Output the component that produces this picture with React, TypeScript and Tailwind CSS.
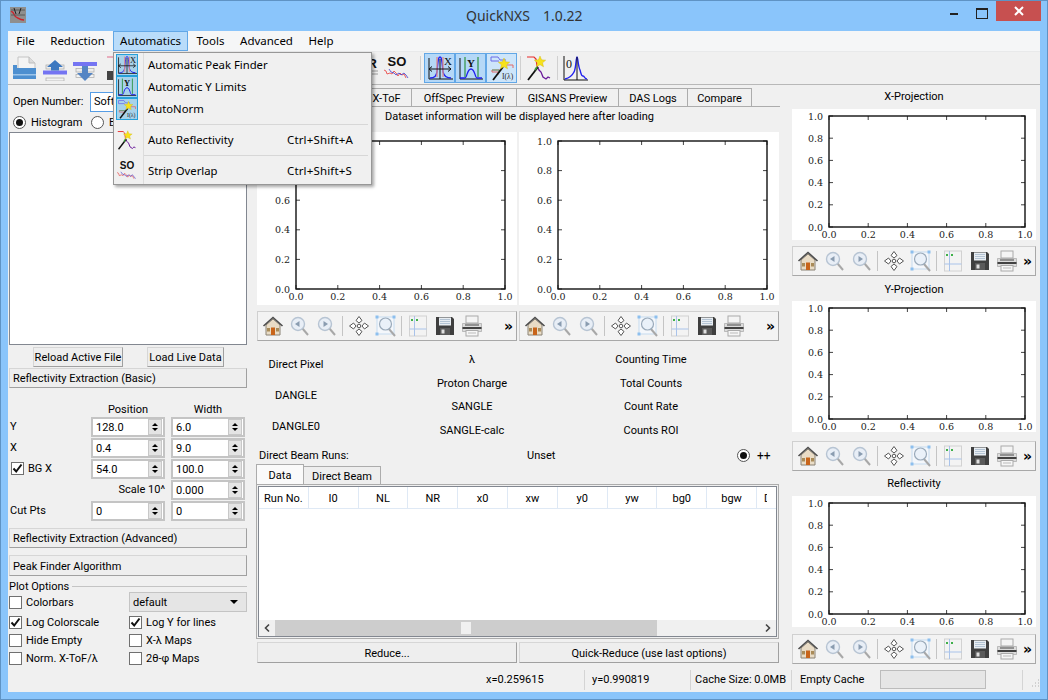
import type { ReactNode } from 'react';

const TICKS = ['0.0', '0.2', '0.4', '0.6', '0.8', '1.0'];

function Plot({ w, h, left, top, right, bottom }: { w: number; h: number; left: number; top: number; right: number; bottom: number }) {
  const ax = w - left - right;
  const ay = h - top - bottom;
  return (
    <svg width={w} height={h} className="block bg-white shrink-0">
      <rect x={left} y={top} width={ax} height={ay} fill="white" stroke="#111" strokeWidth="1.4" />
      {TICKS.map((t, i) => {
        const x = left + (ax * i) / 5;
        const y = top + ay - (ay * i) / 5;
        return (
          <g key={t}>
            <path d={`M${x} ${top}v4M${x} ${top + ay}v-4M${left} ${y}h4M${left + ax} ${y}h-4`} stroke="#111" strokeWidth="0.8" fill="none" />
            <text x={x} y={top + ay + 11} textAnchor="middle" fontSize="9.5" fill="#222" fontFamily="'DejaVu Serif', serif">{t}</text>
            <text x={left - 6} y={y + 3.5} textAnchor="end" fontSize="9.5" fill="#222" fontFamily="'DejaVu Serif', serif">{t}</text>
          </g>
        );
      })}
    </svg>
  );
}

function HomeIcon() {
  return (
    <svg width="22" height="22" viewBox="0 0 22 22">
      <path d="M4 10v10h14V10L11 4z" fill="#e9dcc6" stroke="#8a8274" />
      <path d="M1.500 11 11 2.500 20.500 11" fill="none" stroke="#4d4d4d" strokeWidth="1.6" />
      <rect x="9" y="12.500" width="4" height="7.500" fill="#c8641a" />
      <rect x="5" y="13" width="3" height="3.500" fill="#a98b58" />
      <rect x="14" y="13" width="3" height="3.500" fill="#a98b58" />
    </svg>
  );
}

function ZoomDir({ next }: { next?: boolean }) {
  return (
    <svg width="22" height="22" viewBox="0 0 22 22">
      <path d="M13.500 13.500 19 20" stroke="#a8a8a8" strokeWidth="2" />
      <circle cx="9" cy="9" r="6.500" fill="#e8eef6" stroke="#b7c4d3" strokeWidth="1.4" />
      <path d={next ? 'M7.500 6v6l4.500-3z' : 'M10.500 6v6L6 9z'} fill="#8a9cb0" />
    </svg>
  );
}

function MoveIcon() {
  return (
    <svg width="22" height="22" viewBox="0 0 22 22" fill="#fff" stroke="#555" strokeWidth="1">
      <path d="M11 1.500 14 5.500 11 8 8 5.500z" />
      <path d="M11 20.500 14 16.500 11 14 8 16.500z" />
      <path d="M1.500 11 5.500 8 8 11 5.500 14z" />
      <path d="M20.500 11 16.500 8 14 11 16.500 14z" />
      <circle cx="11" cy="11" r="1.800" />
    </svg>
  );
}

function ZoomRectIcon() {
  return (
    <svg width="24" height="24" viewBox="0 0 24 24">
      <rect x="3" y="3" width="17" height="17" fill="#f4f7fb" stroke="#c6dbef" />
      <path d="M15 15 21 22" stroke="#a8a8a8" strokeWidth="2" />
      <circle cx="11.500" cy="10" r="6" fill="#eaf1f9" stroke="#9aaaba" strokeWidth="1.2" />
      <g fill="#8dbfee">
        <rect x="1.500" y="1.500" width="3" height="3" />
        <rect x="18.500" y="1.500" width="3" height="3" />
        <rect x="1.500" y="18.500" width="3" height="3" />
      </g>
    </svg>
  );
}

function SubplotIcon() {
  return (
    <svg width="20" height="22" viewBox="0 0 20 22">
      <rect x="1.500" y="1" width="17" height="20" fill="#f3f3f3" stroke="#d2d2d2" />
      <path d="M6.500 1v20M1.500 14h17" stroke="#a9c3ea" />
      <path d="M3 5h2M8 5h2" stroke="#3fb04a" strokeWidth="2" />
    </svg>
  );
}

function SaveIcon() {
  return (
    <svg width="20" height="20" viewBox="0 0 20 20">
      <path d="M1 1h16l2 2v16H1z" fill="#3f3f3f" />
      <rect x="4" y="1.500" width="12" height="8" fill="#e8edf2" />
      <path d="M5 3.500h10M5 5.500h10M5 7.500h10" stroke="#b4c4d4" />
      <rect x="5" y="12" width="10" height="7" fill="#5a5a5a" />
      <rect x="6.500" y="13.500" width="3" height="4" fill="#e0e0e0" />
    </svg>
  );
}

function PrintIcon() {
  return (
    <svg width="22" height="22" viewBox="0 0 22 22">
      <rect x="5" y="1" width="12" height="7" fill="#f4f4f4" stroke="#aaa" />
      <path d="M1.500 8.500h19v8h-19z" fill="#dcdcdc" stroke="#9a9a9a" strokeWidth="0.6" />
      <path d="M4 10h14" stroke="#444" strokeWidth="1" />
      <path d="M1.500 13h19" stroke="#1c1c1c" strokeWidth="1.6" />
      <rect x="5" y="15.500" width="12" height="5.500" fill="#f6f6f6" stroke="#aaa" />
      <path d="M7 18h8" stroke="#bbb" />
    </svg>
  );
}

function NavBar({ className }: { className: string }) {
  const sep = <div className="w-px h-[20px] bg-[#c4c4c4] mx-[2px]" />;
  const btn = 'w-[27px] flex items-center justify-center shrink-0';
  return (
    <div className={`${className} h-[30px] flex items-center pl-[1px] bg-[#f3f3f3] border border-[#d0d0d0] border-r-[#a8a8a8] border-b-[#a8a8a8] shrink-0`}>
      <div className={btn}><HomeIcon /></div>
      <div className={btn}><ZoomDir /></div>
      <div className={btn}><ZoomDir next /></div>
      {sep}
      <div className={btn}><MoveIcon /></div>
      <div className={btn}><ZoomRectIcon /></div>
      {sep}
      <div className={btn}><SubplotIcon /></div>
      <div className={btn}><SaveIcon /></div>
      <div className={btn}><PrintIcon /></div>
      <span className="ml-auto mr-[3px] font-bold text-[14px] leading-none font-['DejaVu_Sans',sans-serif]">»</span>
    </div>
  );
}

function IconOpen() {
  return (
    <svg width="26" height="26" viewBox="0 0 26 26">
      <path d="M6 2h11l6 6v8H6z" fill="#f4f4f4" stroke="#c4c4c4" />
      <path d="M17 2v6h6" fill="#dcdcdc" stroke="#bdbdbd" />
      <path d="M1 10h4v3h19v11H1z" fill="#4d8fd0" />
      <path d="M1 19h23v1.500H1z" fill="#9cc4ea" />
    </svg>
  );
}

function IconUp() {
  return (
    <svg width="26" height="26" viewBox="0 0 26 26">
      <rect x="4" y="10" width="18" height="4" fill="#ececec" stroke="#a8a8a8" strokeWidth="0.7" />
      <rect x="1" y="15.500" width="24" height="4" fill="#7474f2" />
      <rect x="4" y="23" width="18" height="3" fill="#f2f2f2" stroke="#a8a8a8" strokeWidth="0.7" />
      <path d="M13 5l8 7h-4v3.500H9V12H5z" fill="#3c78c0" />
    </svg>
  );
}

function IconDown() {
  return (
    <svg width="26" height="26" viewBox="0 0 26 26">
      <rect x="1" y="7" width="24" height="4" fill="#7474f2" />
      <rect x="4" y="13.500" width="18" height="3.500" fill="#ececec" stroke="#a8a8a8" strokeWidth="0.7" />
      <rect x="4" y="19.500" width="18" height="3" fill="#f2f2f2" stroke="#a8a8a8" strokeWidth="0.7" />
      <path d="M10 11h6v7h5l-8 8-8-8h5z" fill="#5585c4" />
    </svg>
  );
}

function IconSave() {
  return (
    <svg width="26" height="26" viewBox="0 0 26 26">
      <path d="M1 2h8l2 6" fill="none" stroke="#e06a8a" />
      <rect x="1" y="16" width="10" height="9" fill="#444" />
    </svg>
  );
}

function IconX() {
  return (
    <svg width="26" height="26" viewBox="0 0 26 26">
      <path d="M2 3v21h24" fill="none" stroke="#111" />
      <path d="M3 23c5 0 6-2 7-6 1-10 1-15 3-15s2 5 3 15c1 4 3 6 8 6" fill="none" stroke="#2222ee" strokeWidth="1.3" />
      <path d="M10 2v20M16 2v20" stroke="#e08a8a" strokeWidth="1.3" />
      <path d="M2 14h22M2 14l3-2.500M2 14l3 2.500M24 14l-3-2.500M24 14l-3 2.500M13 4v20" fill="none" stroke="#111" />
      <text x="17" y="10" fontSize="11" fontFamily="'Liberation Serif', serif" fill="#111">X</text>
    </svg>
  );
}

function IconY() {
  return (
    <svg width="26" height="26" viewBox="0 0 26 26">
      <path d="M2 3v21h23" fill="none" stroke="#111" />
      <path d="M2 23h5c2 0 2-9 6-9s4 9 6 9h5" fill="none" stroke="#2222ee" strokeWidth="1.3" />
      <path d="M7 2v20M20 2v20" stroke="#3a9a52" strokeWidth="1.3" />
      <text x="9" y="12" fontSize="11" fontWeight="bold" fontFamily="'Liberation Serif', serif" fill="#111">Y</text>
    </svg>
  );
}

function Star({ x, y, r }: { x: number; y: number; r: number }) {
  const pts = Array.from({ length: 10 }, (_, i) => {
    const a = (Math.PI / 5) * i - Math.PI / 2;
    const q = i % 2 ? r * 0.45 : r;
    return `${x + q * Math.cos(a)},${y + q * Math.sin(a)}`;
  }).join(' ');
  return <polygon points={pts} fill="#f7e21a" stroke="#c9b010" strokeWidth="0.4" />;
}

function IconNorm() {
  return (
    <svg width="26" height="26" viewBox="0 0 26 26">
      <path d="M2 2h7l2 3h6M2 2v4h8" fill="none" stroke="#6a6ae8" />
      <path d="M18 10h6v3M3 17h6v3M3 17v-2h8" fill="none" stroke="#e06a6a" />
      <path d="M3 15h7v3" fill="none" stroke="#58a878" />
      <path d="M4 25 14 12" stroke="#111" strokeWidth="1.8" />
      <Star x={15} y={9} r={6} />
      <text x="13" y="24" fontSize="7.500" fontFamily="'Liberation Serif', serif" fill="#222">I(λ)</text>
    </svg>
  );
}

function IconRefl({ size = 26 }: { size?: number }) {
  return (
    <svg width={size} height={size} viewBox="0 0 26 26">
      <path d="M1 2h7l2 2 1 7" fill="none" stroke="#e82a2a" strokeWidth="1.200" />
      <path d="M11 11l2 4 2 2 2 5 3 2 2-2 2 1" fill="none" stroke="#6a1a9a" strokeWidth="1.300" />
      <path d="M2 25 12 12" stroke="#111" strokeWidth="1.800" />
      <path d="M9 15l2-3" stroke="#3a9a3a" strokeWidth="1.800" />
      <Star x={14} y={7} r={6} />
    </svg>
  );
}

function IconZero() {
  return (
    <svg width="26" height="26" viewBox="0 0 26 26">
      <path d="M1 1v24h24" fill="none" stroke="#111" />
      <path d="M2 24c4-1 7-3 9-7 2-3 2-15 3-15s1 9 3 13c1 3 1 6 3 6s1 3 4 3" fill="none" stroke="#2222ee" strokeWidth="1.400" />
      <path d="M14 2v23" stroke="#111" />
      <text x="3" y="13" fontSize="12" fontFamily="'Liberation Serif', serif" fill="#111">0</text>
    </svg>
  );
}

function IconSO({ size = 26 }: { size?: number }) {
  return (
    <svg width={size} height={size} viewBox="0 0 26 26">
      <text x="13" y="11" textAnchor="middle" fontSize="13" fontWeight="bold" fontFamily="'Liberation Sans', sans-serif" fill="#111">SO</text>
      <path d="M0 15l2 1 1 3 3-1 2 1 2-3 2 2 2 3 2-3 2 2 2-1 2 4" fill="none" stroke="#e83a3a" strokeWidth="0.800" />
      <path d="M5 14l2 3 3 1 2 2 3-2 2 2 3-2 2 2 2 3" fill="none" stroke="#4040d0" strokeWidth="0.800" />
    </svg>
  );
}

function IconR() {
  return (
    <svg width="26" height="26" viewBox="0 0 26 26">
      <text x="25" y="13" textAnchor="end" fontSize="13" fontWeight="bold" fontFamily="'Liberation Sans', sans-serif" fill="#111">R</text>
      <path d="M14 16h12M14 19h12" stroke="#888" strokeWidth="0.800" />
    </svg>
  );
}

function AppIcon() {
  return (
    <svg width="16" height="16" viewBox="0 0 16 16" className="block">
      <rect width="16" height="16" fill="#8f8f8f" />
      <path d="M1 5c2-2 3 4 5 5s4 3 8 3" fill="none" stroke="#d0202a" strokeWidth="1.300" />
      <path d="M1 3h14M1 8h14" stroke="#5a5a5a" />
      <path d="M4 1l2 6M11 1l-2 6" stroke="#222" />
    </svg>
  );
}

function Chevron({ right }: { right?: boolean }) {
  return (
    <svg width="16" height="16" viewBox="0 0 16 16" className="shrink-0">
      <path d={right ? 'M6 4.500 9.500 8 6 11.500' : 'M10 4.500 6.500 8 10 11.500'} fill="none" stroke="#444" strokeWidth="1.600" />
    </svg>
  );
}

function Btn({ children, className }: { children: ReactNode; className: string }) {
  return <div className={`${className} flex items-center pt-[1px] whitespace-nowrap bg-[#eeeeee] border border-[#d6d6d6] border-r-[#a0a0a0] border-b-[#a0a0a0] shrink-0`}>{children}</div>;
}

function Spin({ value, className }: { value: string; className: string }) {
  return (
    <div className={`${className} h-[20px] flex items-center bg-white border-2 border-[#c4c4c4] shrink-0`}>
      <span className="pl-[3px] pt-[1px] flex-1">{value}</span>
      <div className="w-[14px] h-[16px] mr-[1px] bg-[#e4e4e4] border border-[#c8c8c8] flex flex-col items-center justify-center gap-[2px]">
        <div className="w-0 h-0 border-x-[3px] border-x-transparent border-b-[3px] border-b-black" />
        <div className="w-0 h-0 border-x-[3px] border-x-transparent border-t-[3px] border-t-black" />
      </div>
    </div>
  );
}

function Check({ checked }: { checked?: boolean }) {
  return (
    <div className="w-[13px] h-[13px] bg-white border border-[#707070] flex items-center justify-center shrink-0">
      {checked && (
        <svg width="11" height="11" viewBox="0 0 11 11">
          <path d="M1.500 5.500 4.200 8.500 9.500 1.500" fill="none" stroke="#111" strokeWidth="2" />
        </svg>
      )}
    </div>
  );
}

function Radio({ checked }: { checked?: boolean }) {
  return (
    <div className="w-[13px] h-[13px] rounded-full bg-white border border-[#555] flex items-center justify-center shrink-0">
      {checked && <div className="w-[7px] h-[7px] rounded-full bg-[#111]" />}
    </div>
  );
}

function CheckRow({ label, checked, className }: { label: string; checked?: boolean; className: string }) {
  return (
    <div className={`${className} flex items-center gap-[4px]`}>
      <Check checked={checked} />
      <span>{label}</span>
    </div>
  );
}

function MenuItem({ icon, label, keys, active, className }: { icon: ReactNode; label: string; keys?: string; active?: boolean; className: string }) {
  return (
    <div className={`${className} flex items-center shrink-0`}>
      <div className="w-[26px] flex justify-center shrink-0">
        <div className={active ? 'w-[22px] h-[22px] flex items-center justify-center bg-[#a8d2ea] border border-[#26a0da] overflow-hidden' : 'w-[22px] h-[22px] flex items-center justify-center'}>{icon}</div>
      </div>
      <span className="ml-[8px] w-[139px] whitespace-nowrap text-[11.3px]">{label}</span>
      {keys && <span className="whitespace-nowrap tracking-[0.15px]">{keys}</span>}
    </div>
  );
}

const HEADERS = ['Run No.', 'I0', 'NL', 'NR', 'x0', 'xw', 'y0', 'yw', 'bg0', 'bgw'];

export default function App() {
  return (
    <div className="w-[1048px] h-[700px] relative overflow-hidden bg-[#8ac5fb] border border-[#5f93c4] text-[11px] leading-none text-black font-['Roboto','Noto_Sans',sans-serif]">
      {/* title bar */}
      <div className="h-[30px] flex items-start">
        <div className="ml-[9px] mt-[6px]"><AppIcon /></div>
        <div className="ml-[440px] mt-[8px] flex gap-[13px] text-[14px] text-[#333] font-['Noto_Sans',sans-serif]">
          <span>QuickNXS</span>
          <span>1.0.22</span>
        </div>
        <div className="ml-auto flex items-start">
          <div className="w-[8px] h-[2px] mt-[12px] bg-[#222]" />
          <div className="w-[10px] h-[8px] mt-[7px] ml-[18px] border border-[#222] border-t-2 box-content" />
          <div className="w-[45px] h-[20px] ml-[8px] mr-[6px] bg-[#c75050] flex items-center justify-center">
            <svg width="10" height="10" viewBox="0 0 10 10"><path d="M1 1l8 8M9 1l-8 8" stroke="#fff" strokeWidth="2" /></svg>
          </div>
        </div>
      </div>

      <div className="mx-[7px] h-[661px] bg-[#f0f0f0] flex flex-col">
        {/* menu bar */}
        <div className="h-[21px] bg-[#f5f6f7] border-b border-[#e8e9ea] flex items-stretch pl-[1px] text-[11.5px] font-['Noto_Sans',sans-serif] shrink-0">
          <div className="w-[33px] flex items-center justify-center">File</div>
          <div className="w-[71px] flex items-center justify-center">Reduction</div>
          <div className="w-[75px] flex items-center justify-center bg-[#b9dcfa] border border-[#62a7e6]">Automatics</div>
          <div className="w-[45px] flex items-center justify-center">Tools</div>
          <div className="w-[67px] flex items-center justify-center">Advanced</div>
          <div className="w-[42px] flex items-center justify-center">Help</div>
        </div>

        {/* tool bar */}
        <div className="h-[33px] border-b border-[#b8b8b8] flex items-center pl-[2px] shrink-0">
          <div className="w-[30px] flex justify-center"><IconOpen /></div>
          <div className="w-[30px] flex justify-center"><IconUp /></div>
          <div className="w-[30px] flex justify-center"><IconDown /></div>
          <div className="ml-[6px] w-[26px]"><IconSave /></div>
          <div className="ml-[220px] w-[26px]"><IconR /></div>
          <div className="ml-[6px] w-[26px]"><IconSO /></div>
          <div className="w-px h-[24px] bg-[#d0d0d0] ml-[10px] mr-[3px]" />
          <div className="w-[31px] h-[30px] flex items-center justify-center bg-[#b5d8f7] border border-[#62a7e6]"><IconX /></div>
          <div className="w-[31px] h-[30px] flex items-center justify-center bg-[#b5d8f7] border border-[#62a7e6]"><IconY /></div>
          <div className="w-[31px] h-[30px] flex items-center justify-center bg-[#cde5fa] border border-[#62a7e6]"><IconNorm /></div>
          <div className="w-px h-[24px] bg-[#d0d0d0] ml-[3px] mr-[5px]" />
          <IconRefl />
          <div className="w-px h-[24px] bg-[#d0d0d0] ml-[5px] mr-[5px]" />
          <IconZero />
        </div>

        <div className="flex flex-1 min-h-0">
          {/* left column */}
          <div className="w-[248px] pl-[1px] flex flex-col shrink-0">
            <div className="h-[23px] mt-[5px] flex items-center pl-[4px] shrink-0">
              <span className="w-[77px]">Open Number:</span>
              <div className="w-[80px] h-[20px] bg-white border border-[#569de5] pl-[3px] flex items-center overflow-hidden">Soft</div>
            </div>
            <div className="h-[19px] flex items-center pl-[4px] shrink-0">
              <Radio checked />
              <span className="ml-[5px] w-[60px]">Histogram</span>
              <Radio />
              <span className="ml-[5px]">Events</span>
            </div>
            <div className="h-[213px] mr-[9px] bg-white border border-[#828790] shrink-0" />
            <div className="h-[20px] mt-[2px] flex shrink-0">
              <Btn className="ml-[24px] w-[90px] justify-center">Reload Active File</Btn>
              <Btn className="ml-[24px] w-[77px] justify-center">Load Live Data</Btn>
            </div>
            <Btn className="h-[20px] mt-[1px] mr-[9px] pl-[3px]">Reflectivity Extraction (Basic)</Btn>

            <div className="flex h-[14px] mt-[14px] pt-[2px] shrink-0">
              <div className="w-[82px]" />
              <div className="w-[74px] text-center">Position</div>
              <div className="ml-[6px] w-[74px] text-center">Width</div>
            </div>
            <div className="h-[21px] flex items-center shrink-0"><span className="w-[82px] pl-[1px]">Y</span><Spin value="128.0" className="w-[74px]" /><Spin value="6.0" className="ml-[6px] w-[74px]" /></div>
            <div className="h-[21px] flex items-center shrink-0"><span className="w-[82px] pl-[1px]">X</span><Spin value="0.4" className="w-[74px]" /><Spin value="9.0" className="ml-[6px] w-[74px]" /></div>
            <div className="h-[21px] flex items-center shrink-0">
              <div className="w-[82px] flex items-center pl-[2px] gap-[4px]"><Check checked /><span>BG X</span></div>
              <Spin value="54.0" className="w-[74px]" /><Spin value="100.0" className="ml-[6px] w-[74px]" />
            </div>
            <div className="h-[21px] flex items-center shrink-0"><span className="w-[162px] pr-[6px] text-right">Scale 10^</span><Spin value="0.000" className="w-[74px]" /></div>
            <div className="h-[21px] flex items-center shrink-0"><span className="w-[82px] pl-[1px]">Cut Pts</span><Spin value="0" className="w-[74px]" /><Spin value="0" className="ml-[6px] w-[74px]" /></div>

            <Btn className="h-[20px] mt-[7px] mr-[9px] pl-[3px]">Reflectivity Extraction (Advanced)</Btn>
            <Btn className="h-[21px] mt-[7px] mr-[9px] pl-[3px]">Peak Finder Algorithm</Btn>

            <div className="flex items-center h-[12px] mt-[4px] shrink-0">
              <span>Plot Options</span>
              <div className="flex-1 h-px bg-[#c4c4c4] ml-[3px] mr-[9px]" />
            </div>
            <div className="h-[20px] flex items-center shrink-0">
              <CheckRow label="Colorbars" className="w-[120px]" />
              <div className="w-[118px] h-[20px] bg-[#e5e5e5] border border-[#c4c4c4] flex items-center justify-between pl-[3px] pr-[8px]">
                <span>default</span>
                <div className="w-0 h-0 border-x-[4px] border-x-transparent border-t-[4px] border-t-black" />
              </div>
            </div>
            <div className="h-[18px] mt-[1px] flex items-center shrink-0"><CheckRow label="Log Colorscale" checked className="w-[120px]" /><CheckRow label="Log Y for lines" checked className="w-[117px]" /></div>
            <div className="h-[18px] flex items-center shrink-0"><CheckRow label="Hide Empty" className="w-[120px]" /><CheckRow label="X-λ Maps" className="w-[117px]" /></div>
            <div className="h-[18px] flex items-center shrink-0"><CheckRow label="Norm. X-ToF/λ" className="w-[120px]" /><CheckRow label="2θ-φ Maps" className="w-[117px]" /></div>
          </div>

          {/* center column */}
          <div className="w-[524px] flex flex-col shrink-0">
            <div className="h-[19px] mt-[3px] flex items-end shrink-0 border-b border-[#acacac]">
              <div className="w-[105px] h-[18px]" />
              <div className="w-[51px] h-[18px] pt-[1px] border border-b-0 border-[#acacac] bg-[#f0f0f0] flex items-center justify-center overflow-hidden">X-ToF</div>
              <div className="w-[105px] h-[18px] pt-[1px] border border-l-0 border-b-0 border-[#acacac] flex items-center justify-center">OffSpec Preview</div>
              <div className="w-[102px] h-[18px] pt-[1px] border border-l-0 border-b-0 border-[#acacac] flex items-center justify-center">GISANS Preview</div>
              <div className="w-[69px] h-[18px] pt-[1px] border border-l-0 border-b-0 border-[#acacac] flex items-center justify-center">DAS Logs</div>
              <div className="w-[64px] h-[18px] pt-[1px] border border-l-0 border-b-0 border-[#acacac] flex items-center justify-center">Compare</div>
            </div>
            <div className="h-[20px] pl-[129px] pb-[1px] flex items-center shrink-0">Dataset information will be displayed here after loading</div>
            <div className="flex gap-[2px] mt-[5px] pl-[1px] shrink-0">
              <Plot w={260} h={173} left={39} top={9} right={12} bottom={16} />
              <Plot w={260} h={173} left={39} top={9} right={12} bottom={16} />
            </div>
            <div className="flex gap-[2px] mt-[6px] pl-[1px] shrink-0">
              <NavBar className="w-[260px]" />
              <NavBar className="w-[260px]" />
            </div>
            <div className="flex h-[92px] mt-[7px] shrink-0">
              <div className="w-[78px] ml-[1px] flex flex-col items-center justify-between pt-[11px] pb-[8px]">
                <span>Direct Pixel</span><span>DANGLE</span><span>DANGLE0</span>
              </div>
              <div className="w-[120px] ml-[77px] flex flex-col items-center justify-between pt-[6px] pb-[4px]">
                <span>λ</span><span>Proton Charge</span><span>SANGLE</span><span>SANGLE-calc</span>
              </div>
              <div className="w-[120px] ml-[59px] flex flex-col items-center justify-between pt-[6px] pb-[4px]">
                <span>Counting Time</span><span>Total Counts</span><span>Count Rate</span><span>Counts ROI</span>
              </div>
            </div>
            <div className="h-[18px] mt-[6px] pt-[1px] flex items-center pl-[3px] shrink-0">
              <span className="w-[268px] shrink-0">Direct Beam Runs:</span>
              <span className="w-[28px] shrink-0">Unset</span>
              <div className="ml-[182px]"><Radio checked /></div>
              <span className="ml-[7px] text-[12px]">++</span>
            </div>
            <div className="flex items-end h-[20px] shrink-0">
              <div className="w-[48px] h-[20px] pt-[1px] bg-[#fafafa] border border-b-0 border-[#acacac] flex items-center justify-center">Data</div>
              <div className="w-[77px] h-[18px] pt-[1px] bg-[#eeeeee] border border-l-0 border-b-0 border-[#acacac] flex items-center justify-center">Direct Beam</div>
            </div>
            <div className="h-[155px] border border-[#acacac] p-[1px] shrink-0 mr-[1px]">
              <div className="h-full bg-white border border-[#828790] flex flex-col">
                <div className="h-[22px] flex border-b border-[#dfe9f5] overflow-hidden shrink-0">
                  {HEADERS.map((h) => (
                    <div key={h} className="w-[49.800px] pt-[1px] shrink-0 flex items-center justify-center border-r border-[#dfe9f5]">{h}</div>
                  ))}
                  <div className="w-[10px] pl-[7px] pt-[1px] shrink-0 overflow-hidden flex items-center">D</div>
                </div>
                <div className="flex-1" />
                <div className="h-[16px] bg-[#f0f0f0] flex items-center shrink-0">
                  <Chevron />
                  <div className="w-[382px] h-full bg-[#cdcdcd] flex items-center justify-center">
                    <div className="w-[10px] h-[12px] bg-[#f0f0f0]" />
                  </div>
                  <div className="ml-auto"><Chevron right /></div>
                </div>
              </div>
            </div>
            <div className="flex gap-[2px] mt-[3px] pl-[1px] shrink-0">
              <Btn className="w-[260px] h-[21px] justify-center">Reduce...</Btn>
              <Btn className="w-[260px] h-[21px] justify-center">Quick-Reduce (use last options)</Btn>
            </div>
          </div>

          {/* right column */}
          <div className="w-[244px] ml-[12px] flex flex-col shrink-0">
            <div className="h-[24px] pb-[2px] flex items-center justify-center shrink-0">X-Projection</div>
            <Plot w={244} h={131} left={37} top={7} right={11} bottom={13} />
            <NavBar className="w-[244px] mt-[6px]" />
            <div className="h-[25px] pt-[1px] flex items-center justify-center shrink-0">Y-Projection</div>
            <Plot w={244} h={131} left={37} top={7} right={11} bottom={13} />
            <NavBar className="w-[244px] mt-[9px]" />
            <div className="h-[25px] flex items-center justify-center shrink-0">Reflectivity</div>
            <Plot w={244} h={131} left={37} top={7} right={11} bottom={13} />
            <NavBar className="w-[244px] mt-[7px]" />
          </div>
        </div>

        {/* status bar */}
        <div className="h-[26px] pt-[1px] flex items-center shrink-0">
          <span className="ml-[478px] w-[98px]">x=0.259615</span>
          <div className="w-px h-[20px] bg-[#d4d4d4]" />
          <span className="ml-[7px] w-[98px]">y=0.990819</span>
          <div className="w-px h-[20px] bg-[#d4d4d4]" />
          <span className="ml-[4px] w-[96px] whitespace-nowrap">Cache Size: 0.0MB</span>
          <div className="w-px h-[20px] bg-[#d4d4d4]" />
          <span className="ml-[8px] w-[80px] whitespace-nowrap">Empty Cache</span>
          <div className="w-[106px] h-[19px] bg-[#e6e6e6] border border-[#bcbcbc]" />
          <div className="ml-[36px] w-px h-[20px] bg-[#d4d4d4]" />
          <svg width="10" height="10" viewBox="0 0 10 10" className="ml-[7px] mt-[8px]">
            <path d="M8 1h1M5 4h1M8 4h1M2 7h1M5 7h1M8 7h1" stroke="#b0b0b0" />
          </svg>
        </div>
      </div>

      {/* automatics menu */}
      <div className="absolute left-[112px] top-[51px] w-[259px] h-[133px] bg-[#f0f0f0] border border-[#979797] shadow-[2px_2px_3px_rgba(0,0,0,0.35)] pt-[1px] text-[11.5px] font-['Noto_Sans',sans-serif] flex flex-col">
        <div className="absolute left-[29px] top-0 bottom-0 w-px bg-[#dcdcdc]" />
        <MenuItem className="h-[22px]" active icon={<IconX />} label="Automatic Peak Finder" />
        <MenuItem className="h-[22px]" active icon={<IconY />} label="Automatic Y Limits" />
        <MenuItem className="h-[22px]" active icon={<IconNorm />} label="AutoNorm" />
        <div className="h-px bg-[#d7d7d7] ml-[30px] mr-[3px] mt-[4px] shrink-0" />
        <MenuItem className="h-[30px]" icon={<IconRefl size={20} />} label="Auto Reflectivity" keys="Ctrl+Shift+A" />
        <div className="h-px bg-[#d7d7d7] ml-[30px] mr-[3px] shrink-0" />
        <MenuItem className="h-[29px]" icon={<IconSO size={20} />} label="Strip Overlap" keys="Ctrl+Shift+S" />
      </div>
    </div>
  );
}
